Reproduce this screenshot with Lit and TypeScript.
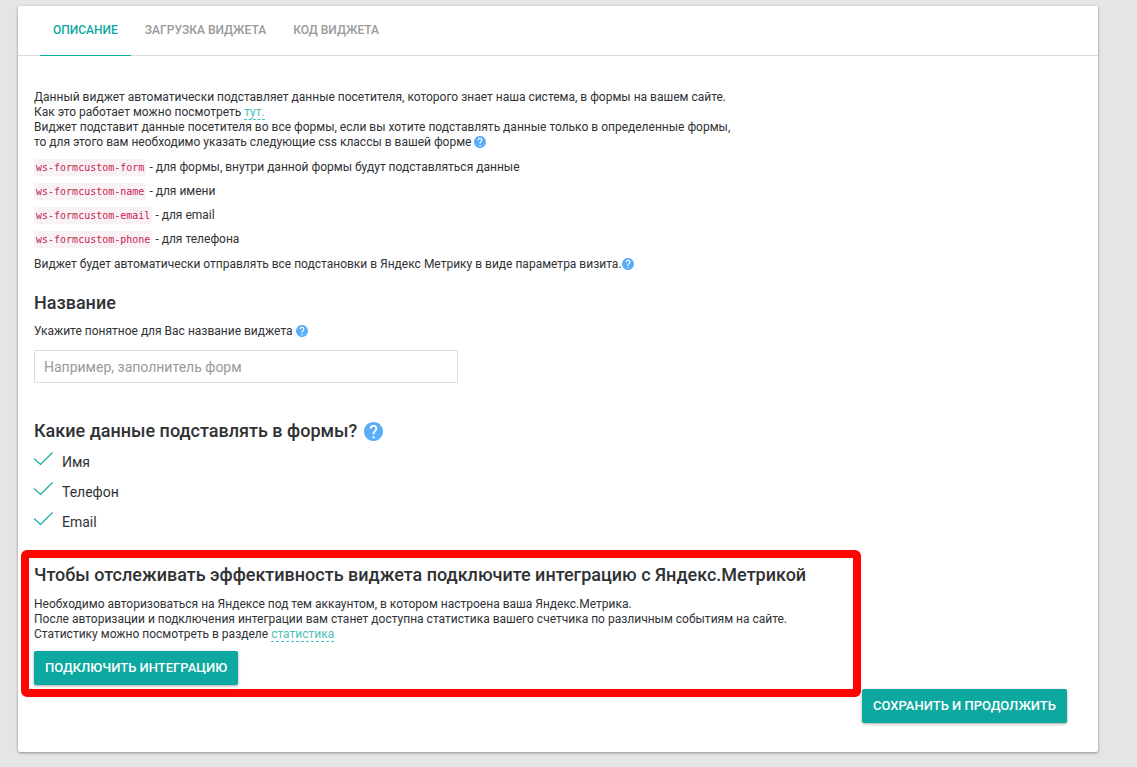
import { LitElement, html, css, svg } from "lit";
import { customElement, property, state } from "lit/decorators.js";
import { classMap } from "lit/directives/class-map.js";

@customElement("help-hint")
export class HelpHint extends LitElement {
  @property({ type: Boolean, reflect: true }) large = false;

  static styles = css`
    :host {
      display: inline-flex;
      width: 12px;
      height: 12px;
      vertical-align: -2px;
    }
    :host([large]) {
      width: 19px;
      height: 19px;
      margin-left: 2px;
      vertical-align: -4px;
    }
    .hint {
      display: flex;
      width: 100%;
      height: 100%;
      padding: 0;
      border: 0;
      background: none;
      cursor: help;
    }
    .glyph {
      width: 100%;
      height: 100%;
    }
  `;

  render() {
    return html`<button class="hint" type="button" aria-label="?">
      <svg class="glyph" viewBox="2 2 20 20" aria-hidden="true">
        ${svg`<path fill="#58aef8" d="M12 2C6.48 2 2 6.48 2 12s4.48 10 10 10 10-4.480 10-10S17.520 2 12 2zm1 17h-2v-2h2v2zm2.070-7.750l-.9.920C13.450 12.900 13 13.500 13 15h-2v-.5c0-1.100.45-2.100 1.170-2.830l1.240-1.260c.37-.36.59-.86.59-1.410 0-1.100-.9-2-2-2s-2 .9-2 2H8c0-2.210 1.790-4 4-4s4 1.790 4 4c0 .88-.36 1.680-.93 2.250z"/>`}
      </svg>
    </button>`;
  }
}

@customElement("app-root")
export class AppRoot extends LitElement {
  @state() private activeTab = 0;

  private tabs = ["Описание", "Загрузка виджета", "Код виджета"];

  private classes = [
    ["ws-formcustom-form", "для формы, внутри данной формы будут подставляться данные"],
    ["ws-formcustom-name", "для имени"],
    ["ws-formcustom-email", "для email"],
    ["ws-formcustom-phone", "для телефона"],
  ];

  private fields = [
    ["name", "Имя"],
    ["phone", "Телефон"],
    ["email", "Email"],
  ];

  static styles = css`
    :host {
      display: block;
      box-sizing: border-box;
      min-height: 100vh;
      padding: 6px 39px 15px 18px;
      background: #e4e6e5;
      color: #2f3234;
      font: 12px/15px Roboto, "Open Sans", sans-serif;
    }
    .card {
      background: #fff;
      border-radius: 2px;
      box-shadow: 0 1px 3px rgba(0, 0, 0, 0.4);
    }
    .tabs {
      display: flex;
      gap: 1px;
      padding-left: 22px;
      border-bottom: 1px solid #dbdbdb;
    }
    .tab {
      height: 50px;
      margin-bottom: -1px;
      padding: 0 13px;
      border: 0;
      border-bottom: 1px solid transparent;
      background: none;
      color: #999;
      font: 500 12px/15px Roboto, sans-serif;
      text-transform: uppercase;
      cursor: pointer;
    }
    .tab.active {
      border-bottom-color: #0ea89f;
      color: #0ea89f;
    }
    .content {
      padding: 34px 16px 29px;
    }
    p {
      margin: 0;
    }
    .classes {
      margin: 10px 0;
      padding: 0;
      list-style: none;
      display: grid;
      gap: 9px;
    }
    code {
      display: inline-block;
      padding: 1px 2px;
      border-radius: 3px;
      background: #f9f2f4;
      color: #c7254e;
      font: 10px/15px "DejaVu Sans Mono", monospace;
    }
    .classes li {
      display: flex;
      align-items: center;
      gap: 3px;
      height: 15px;
    }
    .link {
      color: #4fc0b9;
      text-decoration: none;
      border-bottom: 1px dashed #4fc0b9;
    }
    h2 {
      margin: 0;
      font-size: 18px;
      line-height: 24px;
      font-weight: 500;
    }
    .name {
      display: grid;
      justify-items: start;
      margin-top: 19px;
    }
    .caption {
      margin-top: 9px;
    }
    .input {
      box-sizing: border-box;
      width: 424px;
      max-width: 100%;
      height: 33px;
      margin-top: 11px;
      padding: 1px 9px 0;
      border: 1px solid #dcdcdc;
      border-radius: 1px;
      background: #fff;
      color: #2f3234;
      font: 14px/20px Roboto, sans-serif;
    }
    .input::placeholder {
      color: #999;
      opacity: 1;
    }
    .fields {
      margin-top: 36px;
    }
    .options {
      display: grid;
      justify-items: start;
      gap: 10px;
      margin-top: 9px;
    }
    .option {
      display: flex;
      gap: 8px;
      font-size: 14px;
      line-height: 20px;
    }
    .check {
      appearance: none;
      width: 20px;
      height: 14px;
      margin: 0;
      background: no-repeat center / 20px 14px;
    }
    .check:checked {
      background-image: url("data:image/svg+xml,%3Csvg xmlns='http://www.w3.org/2000/svg' viewBox='0 0 20 14'%3E%3Cpath d='M0 6.500L6.500 12.500L18.500 0.500' fill='none' stroke='%230ea89f' stroke-width='1.200'/%3E%3C/svg%3E");
    }
    .bottom {
      display: flex;
      align-items: flex-end;
      gap: 1px;
      margin: 18px 15px 0 -13px;
    }
    .integration {
      flex: 1;
      min-width: 0;
      margin-bottom: 26px;
      padding: 5px 5px 4px;
      border: 8px solid #ff0500;
      border-radius: 6px;
    }
    .text {
      margin: 10px 0 9px;
    }
    .button {
      height: 34px;
      padding: 0 11px;
      border: 0;
      border-radius: 2px;
      background: #0da8a0;
      box-shadow: 0 1px 3px rgba(0, 0, 0, 0.35);
      color: #fff;
      font: 500 13px/20px Roboto, sans-serif;
      text-transform: uppercase;
      white-space: nowrap;
      cursor: pointer;
    }
  `;

  render() {
    return html`
      <main class="card">
        <nav class="tabs" role="tablist">
          ${this.tabs.map(
            (tab, i) => html`<button
              type="button"
              role="tab"
              aria-selected=${i === this.activeTab ? "true" : "false"}
              class=${classMap({ tab: true, active: i === this.activeTab })}
              @click=${() => (this.activeTab = i)}
            >${tab}</button>`
          )}
        </nav>
        <div class="content">
          <p>
            Данный виджет автоматически подставляет данные посетителя, которого знает наша система, в формы на вашем сайте.<br />
            Как это работает можно посмотреть <a class="link" href="#">тут.</a><br />
            Виджет подставит данные посетителя во все формы, если вы хотите подставлять данные только в определенные формы,<br />
            то для этого вам необходимо указать следующие css классы в вашей форме <help-hint></help-hint>
          </p>
          <ul class="classes">
            ${this.classes.map(([name, about]) => html`<li><code>${name}</code><span>- ${about}</span></li>`)}
          </ul>
          <p>Виджет будет автоматически отправлять все подстановки в Яндекс Метрику в виде параметра визита.<help-hint></help-hint></p>

          <section class="name">
            <h2>Название</h2>
            <p class="caption"><label for="name">Укажите понятное для Вас название виджета</label> <help-hint></help-hint></p>
            <input class="input" id="name" type="text" placeholder="Например, заполнитель форм" />
          </section>

          <section class="fields">
            <h2 id="fields-title">Какие данные подставлять в формы? <help-hint large></help-hint></h2>
            <div class="options" role="group" aria-labelledby="fields-title">
              ${this.fields.map(
                ([id, label]) => html`<label class="option"><input class="check" type="checkbox" name=${id} checked />${label}</label>`
              )}
            </div>
          </section>

          <div class="bottom">
            <section class="integration">
              <h2>Чтобы отслеживать эффективность виджета подключите интеграцию с Яндекс.Метрикой</h2>
              <p class="text">
                Необходимо авторизоваться на Яндексе под тем аккаунтом, в котором настроена ваша Яндекс.Метрика.<br />
                После авторизации и подключения интеграции вам станет доступна статистика вашего счетчика по различным событиям на сайте.<br />
                Статистику можно посмотреть в разделе <a class="link" href="#">статистика</a>
              </p>
              <button class="button" type="button">Подключить интеграцию</button>
            </section>
            <button class="button" type="submit">Сохранить и продолжить</button>
          </div>
        </div>
      </main>
    `;
  }
}
